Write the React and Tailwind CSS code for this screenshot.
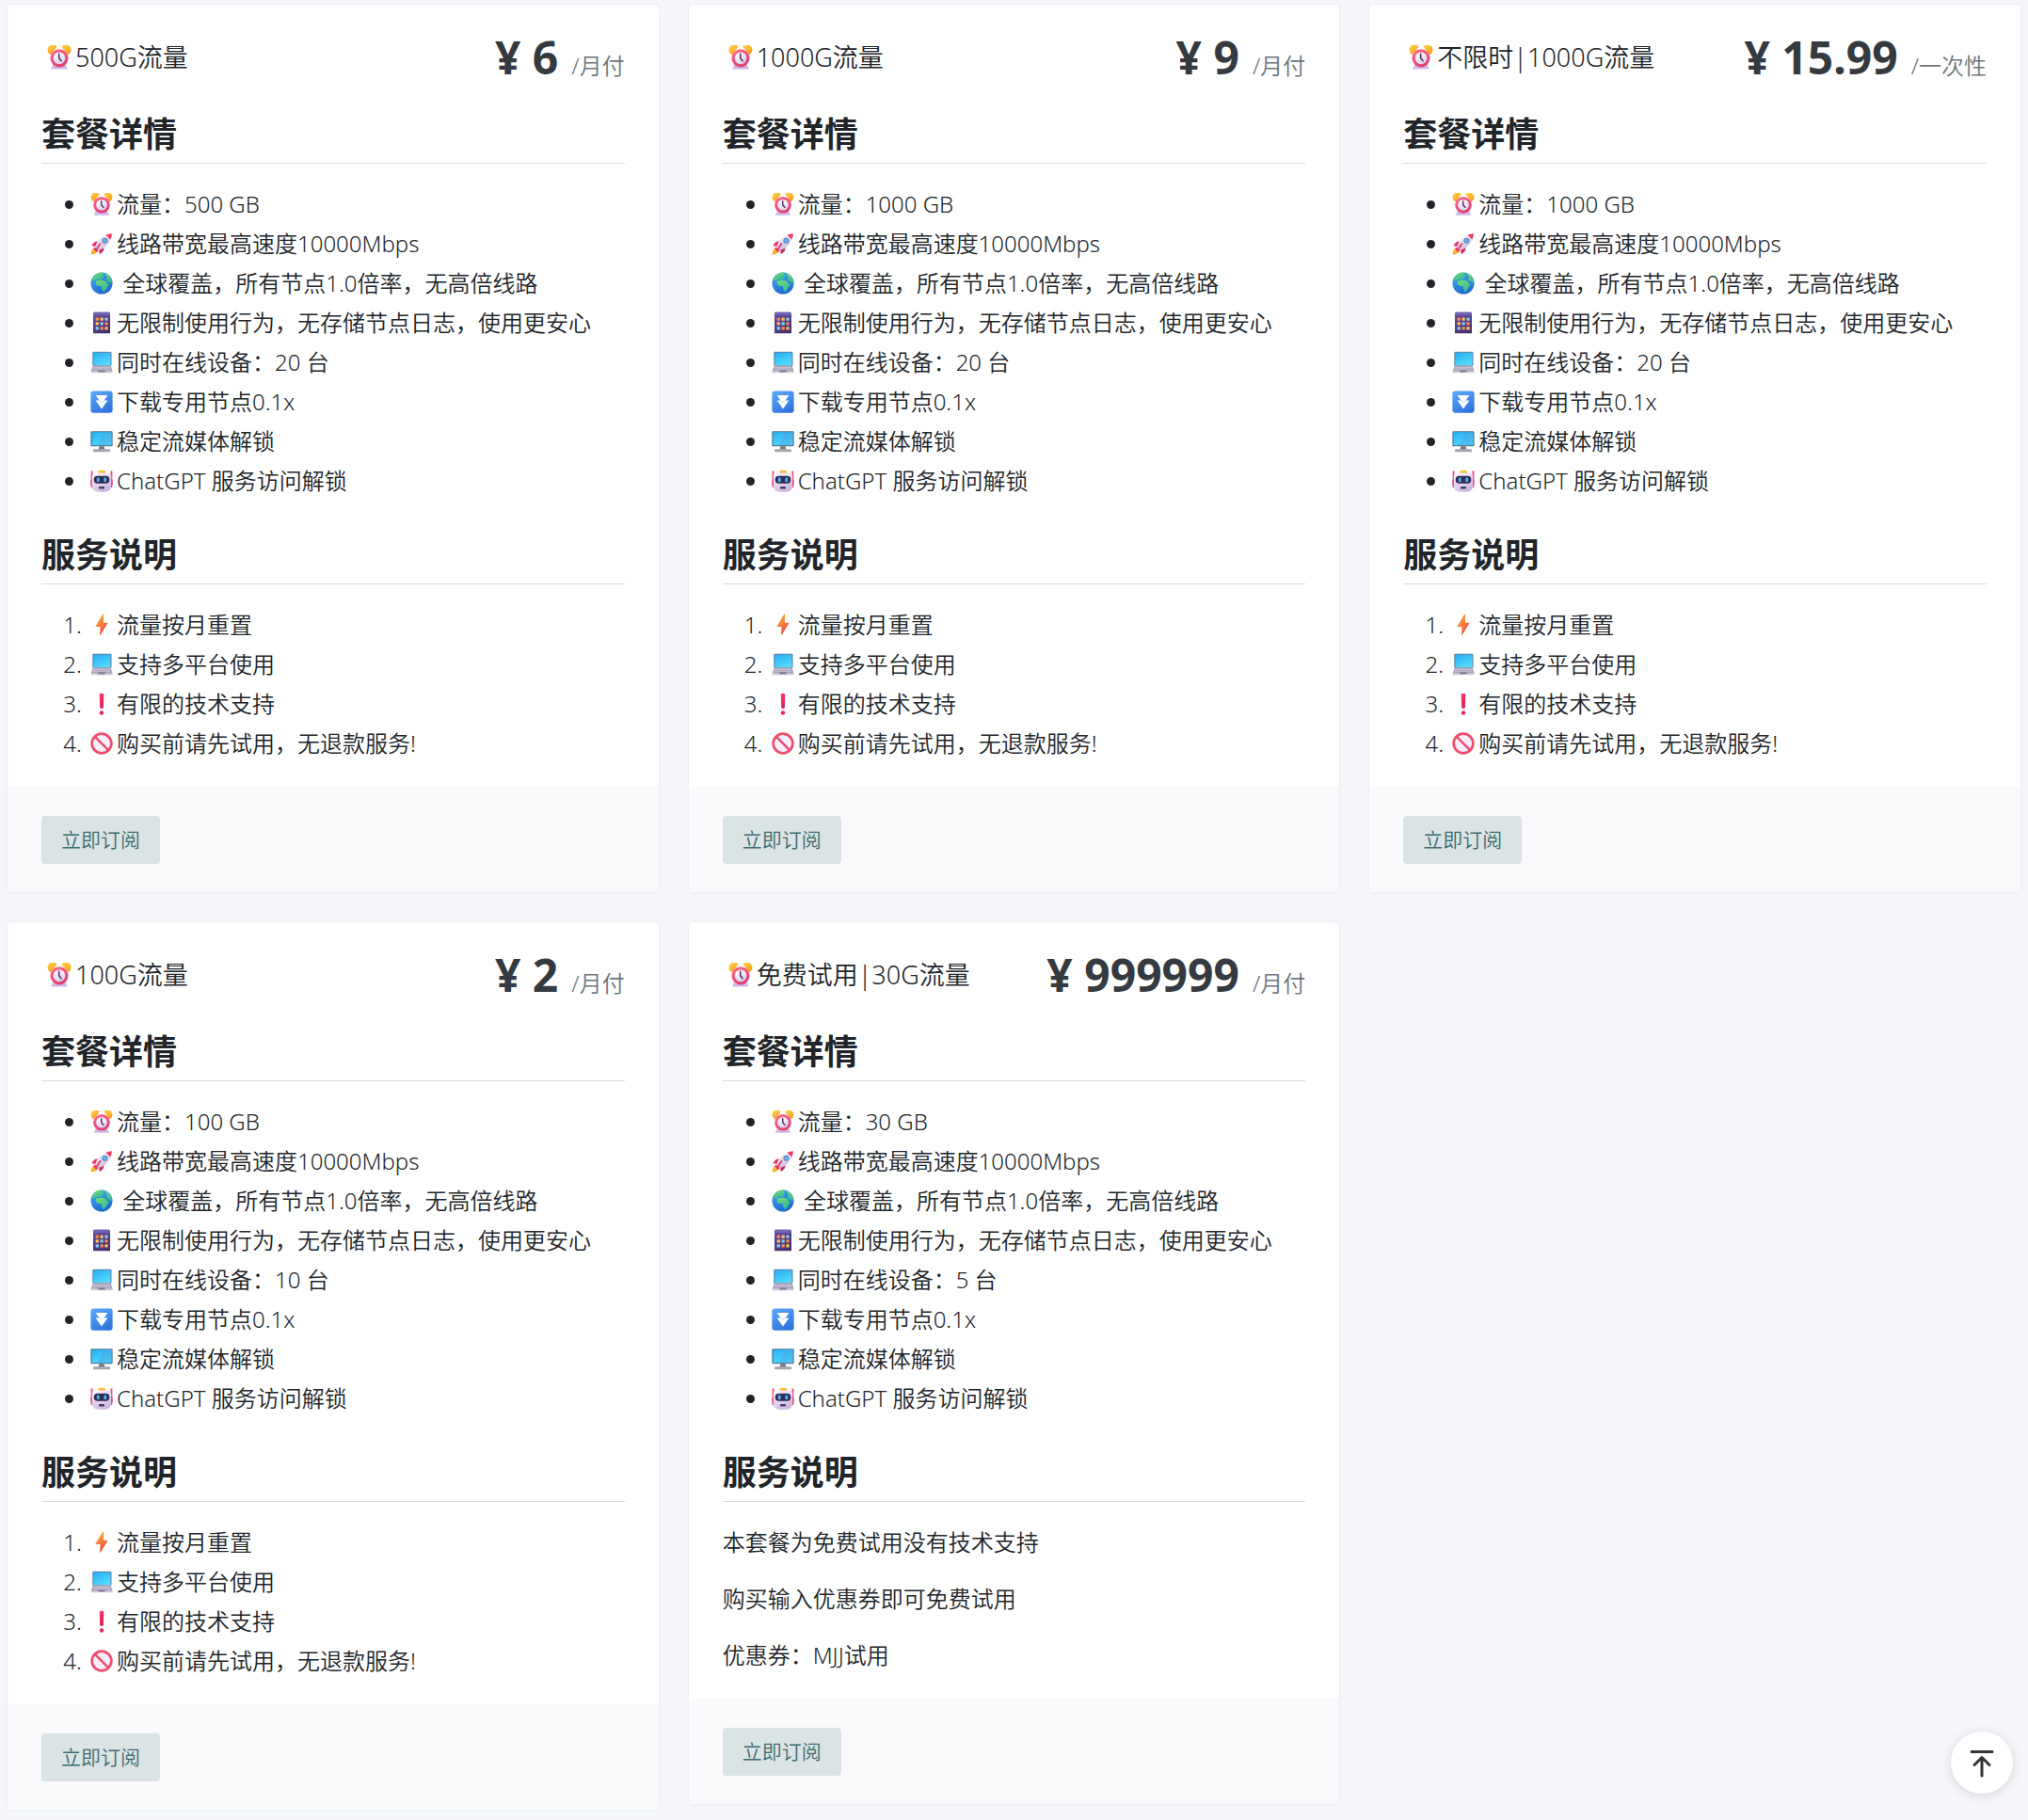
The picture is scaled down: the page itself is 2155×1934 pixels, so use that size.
import React from 'react';

const GRADIENTS = [
  ['gold', '#ffd24a', '#f59b1c'],
  ['pink', '#ff6a86', '#e03a72'],
  ['dial', '#ffffff', '#d9cdea'],
  ['hull', '#ffffff', '#c3b4d8'],
  ['sea', '#3fa9f5', '#1c63c9'],
  ['land', '#6fdc74', '#2fb6a0'],
  ['purple', '#6a4a9c', '#46306f'],
  ['screen', '#29b2f2', '#55dcff'],
  ['blue', '#5aa6f8', '#2f73dc'],
  ['bolt', '#fbb13c', '#f0433a'],
  ['red', '#ff3d62', '#d8175a'],
  ['face', '#fdf6ff', '#c9b3de'],
];

const Defs = () => (
  <svg className="absolute h-0 w-0" aria-hidden="true">
    <defs>
      {GRADIENTS.map(([id, from, to]) => (
        <linearGradient key={id} id={id} x1="0.2" y1="0" x2="0.7" y2="1">
          <stop offset="0" stopColor={from} />
          <stop offset="1" stopColor={to} />
        </linearGradient>
      ))}
    </defs>
  </svg>
);

const ICONS = {
  clock: (
    <>
      <path d="M8 25 H24 L27 31.5 H5 Z" fill="#cdbbe6" />
      <path d="M2 10 A6.5 6.5 0 0 1 13 2 L4.5 12.5 Z" fill="url(#gold)" />
      <path d="M30 10 A6.5 6.5 0 0 0 19 2 L27.5 12.5 Z" fill="url(#gold)" />
      <circle cx="16" cy="17" r="11.8" fill="url(#pink)" />
      <circle cx="16" cy="17" r="7.8" fill="url(#dial)" />
      <path d="M15.6 11.5 V17 L18.6 20.5" fill="none" stroke="#4b2a63" strokeWidth="1.8" strokeLinecap="round" strokeLinejoin="round" />
    </>
  ),
  rocket: (
    <>
      <path d="M6 21 C2 23 1 27 0.8 31.2 C5 31 9 30 11 26 Z" fill="url(#gold)" />
      <path d="M12 13 C7 12 4 14 2 19 L9 20 Z" fill="#e8346c" />
      <path d="M19 20 C20 25 18 28 13 30.5 L12 23 Z" fill="#d42663" />
      <path d="M7 22 C8 12 16 3 30.5 1.5 C29.5 15 20 24 10 25.5 Z" fill="url(#hull)" />
      <path d="M22 3.6 C24.6 2.4 27.5 1.7 30.5 1.5 C30.3 4.5 29.6 7.3 28.3 10 Z" fill="#f23a5e" />
      <path d="M6 20.5 L11.5 26 L8.5 27.5 L4.5 23.5 Z" fill="#e8346c" />
      <circle cx="20.5" cy="11.5" r="4" fill="#5b7fc4" />
      <circle cx="20.5" cy="11.5" r="2.6" fill="#62b6f2" />
      <path d="M14 16 L8 25" stroke="#e8346c" strokeWidth="2.4" strokeLinecap="round" />
    </>
  ),
  globe: (
    <>
      <circle cx="16" cy="16" r="15.4" fill="url(#sea)" />
      <path d="M2.5 9 C5 4 10 1 15 0.7 L19 1 L17 4 L20 6 L16 8 L18 10 L14 11 L10 10 L7 12.5 L3.5 13 Z" fill="url(#land)" />
      <path d="M8 13 L13 11.5 L19 12 L23 14 L24 17 L27 17.5 L24 21 L22 25 L18.5 28.5 L16 24 L15.5 20 L10 19.5 L7.5 16.5 Z" fill="url(#land)" />
      <path d="M21 2 L25 3.5 C28 6 30 9.5 31 13.5 L29 17 L26 13.5 L22.5 11 L24 8 Z" fill="url(#land)" />
    </>
  ),
  grid: (
    <>
      <path d="M6 1 H26 A2 2 0 0 1 28 3 V31 H4 V3 A2 2 0 0 1 6 1 Z" fill="url(#purple)" />
      <path d="M5 1 H27 L28 5.5 H4 Z" fill="#6f62b5" />
      {[8.5, 15, 21.5].map((y, row) =>
        [7.5, 14, 20.5].map((x, col) => (
          <rect key={`${x}-${y}`} x={x} y={y} width="4.4" height="4.4" rx="0.6" fill={['#f98a4b', '#fdc35a', '#7ccdf5'][(row + col) % 3]} />
        ))
      )}
    </>
  ),
  laptop: (
    <>
      <rect x="3" y="1" width="27" height="20" rx="1.5" fill="#5f86ad" />
      <rect x="4.5" y="2.5" width="24" height="17.5" fill="url(#screen)" />
      <path d="M3.5 21 H29 L31.5 29 H0.8 Z" fill="#a9a3b8" />
      <path d="M0.8 29 H31.5 V31 H0.8 Z" fill="#cfc9dc" />
      <path d="M4.5 23 H28 M3.8 25.5 H28.8" stroke="#dcd8e6" strokeWidth="1.3" strokeDasharray="2 0.8" />
      <rect x="11" y="27" width="10" height="3" fill="#858096" />
    </>
  ),
  down: (
    <>
      <rect x="0.5" y="0.5" width="31" height="31" rx="4" fill="url(#blue)" />
      <path d="M7.5 6.5 H24.5 L19.5 14 H24.5 L16 26 L7.5 14 H12.5 Z" fill="#fff" />
      <path d="M12.5 14 L16 17 L19.5 14" fill="none" stroke="#a9cdf8" strokeWidth="1" />
    </>
  ),
  monitor: (
    <>
      <rect x="0.5" y="1.5" width="31" height="21.5" rx="1.5" fill="#4a7391" />
      <rect x="2" y="3" width="28" height="18.5" fill="url(#screen)" />
      <path d="M19 3 H30 V21.5 H10 Z" fill="#4c9fdf" opacity="0.45" />
      <path d="M12.5 23 H19.5 L20.5 27.5 H11.5 Z" fill="#77757f" />
      <rect x="4" y="27" width="24" height="4" rx="1" fill="#a6a4ad" />
    </>
  ),
  robot: (
    <>
      <rect x="0.8" y="1.5" width="2.6" height="24" rx="1.3" fill="#f0507f" />
      <rect x="28.6" y="1.5" width="2.6" height="24" rx="1.3" fill="#f0507f" />
      <rect x="0.5" y="14" width="4" height="8" rx="1.5" fill="#e0447c" />
      <rect x="27.5" y="14" width="4" height="8" rx="1.5" fill="#e0447c" />
      <rect x="11" y="1" width="10" height="6" rx="2" fill="url(#gold)" />
      <path d="M8 4.5 H24 Q29.5 4.5 29.5 10 V22 Q29.5 31.5 20 31.5 H12 Q2.5 31.5 2.5 22 V10 Q2.5 4.5 8 4.5 Z" fill="url(#face)" />
      <rect x="5" y="9" width="22" height="10.5" rx="5" fill="#332b52" />
      <rect x="9" y="11" width="4" height="6.5" rx="2" fill="#3fb2f5" />
      <rect x="19" y="11" width="4" height="6.5" rx="2" fill="#3fb2f5" />
      <rect x="12" y="24" width="8" height="3.2" rx="1" fill="#4a3d68" />
    </>
  ),
  bolt: <path d="M17.5 1 L7 18.5 H14 L13.5 31.5 L25 13 H18.5 L19 1 Z" fill="url(#bolt)" />,
  mark: (
    <>
      <path d="M13 2.5 Q13 1 16 1 Q19 1 19 2.5 L18.5 21 Q18.5 22.5 16 22.5 Q13.5 22.5 13.5 21 Z" fill="url(#red)" />
      <circle cx="16" cy="28.5" r="3" fill="#ef2a55" />
    </>
  ),
  ban: (
    <>
      <circle cx="16" cy="16" r="13.8" fill="#f8eefb" stroke="#ee4f6e" strokeWidth="3.6" />
      <path d="M6.5 6.5 L25.5 25.5" stroke="#ee4f6e" strokeWidth="3.6" />
    </>
  ),
};

const Icon = ({ name, className }) => (
  <svg viewBox="0 0 32 32" className={className} aria-hidden="true">
    {ICONS[name]}
  </svg>
);

const Item = ({ icon, children }) => (
  <li className="mt-1.5 pl-[3px] whitespace-pre first:mt-0">
    <Icon name={icon} className="mr-1 inline-block size-6 align-[-3px]" />
    {children}
  </li>
);

const Heading = ({ children }) => (
  <h2 className="mb-[25px] border-b border-[#d9dbde] pb-2 text-4xl leading-[45px] font-bold">{children}</h2>
);

const PLANS = [
  { title: '500G流量', price: '6', period: '月付', quota: '500', devices: 20 },
  { title: '1000G流量', price: '9', period: '月付', quota: '1000', devices: 20 },
  { title: '不限时|1000G流量', price: '15.99', period: '一次性', quota: '1000', devices: 20 },
  { title: '100G流量', price: '2', period: '月付', quota: '100', devices: 10 },
  {
    title: '免费试用|30G流量',
    price: '999999',
    period: '月付',
    quota: '30',
    devices: 5,
    notes: ['本套餐为免费试用没有技术支持', '购买输入优惠券即可免费试用', '优惠券：MJJ试用'],
  },
];

const Plan = ({ plan }) => (
  <article className="overflow-hidden rounded-sm bg-white shadow-[0_0_3px_rgba(40,60,110,0.10)]">
    <div className="px-9 pt-5 pb-7">
      <header className="mb-[23px] flex items-center justify-between">
        <div className="flex items-center gap-1 pl-1.5 text-[27px] leading-9">
          <Icon name="clock" className="size-[26px]" />
          {plan.title}
        </div>
        <div className="flex items-baseline gap-3.5 text-5xl leading-[72px] font-bold text-[#343a40]">
          ¥ {plan.price}
          <span className="text-2xl font-[350] text-[#6c757d]">/{plan.period}</span>
        </div>
      </header>

      <Heading>套餐详情</Heading>
      <ul className="mb-[38px] list-disc pl-[49px]">
        <Item icon="clock">流量：{plan.quota} GB</Item>
        <Item icon="rocket">线路带宽最高速度10000Mbps</Item>
        <Item icon="globe"> 全球覆盖，所有节点1.0倍率，无高倍线路</Item>
        <Item icon="grid">无限制使用行为，无存储节点日志，使用更安心</Item>
        <Item icon="laptop">同时在线设备：{plan.devices} 台</Item>
        <Item icon="down">下载专用节点0.1x</Item>
        <Item icon="monitor">稳定流媒体解锁</Item>
        <Item icon="robot">ChatGPT 服务访问解锁</Item>
      </ul>

      <Heading>服务说明</Heading>
      {plan.notes ? (
        <div className="space-y-6">
          {plan.notes.map((note) => (
            <p key={note}>{note}</p>
          ))}
        </div>
      ) : (
        <ol className="list-decimal pl-[49px]">
          <Item icon="bolt">流量按月重置</Item>
          <Item icon="laptop">支持多平台使用</Item>
          <Item icon="mark">有限的技术支持</Item>
          <Item icon="ban">购买前请先试用，无退款服务!</Item>
        </ol>
      )}
    </div>
    <footer className="bg-[#fafafc] px-9 pt-[31px] pb-[30px]">
      <button type="button" className="block rounded-sm bg-[#dae4e5] px-[21px] py-2 text-[21px] leading-[35px] text-[#3a6b70]">
        立即订阅
      </button>
    </footer>
  </article>
);

export default function App() {
  return (
    <main className="min-h-screen bg-[#f5f7fb] px-2 pt-[5px] pb-3 font-['Noto_Sans','Noto_Sans_CJK_SC',sans-serif] text-2xl leading-9 font-[350] text-[#212529]">
      <Defs />
      <div className="grid grid-cols-3 items-start gap-8">
        {PLANS.map((plan) => (
          <Plan key={plan.title} plan={plan} />
        ))}
      </div>
      <button
        type="button"
        aria-label="回到顶部"
        className="fixed right-4 bottom-7 flex size-[66px] items-center justify-center rounded-full bg-white text-[#333639] shadow-[0_2px_12px_rgba(0,0,0,0.14)]"
      >
        <svg viewBox="0 0 32 32" className="size-8" fill="none" stroke="currentColor" strokeWidth="3" strokeLinecap="round" strokeLinejoin="round">
          <path d="M5 4.5 H27 M16 30 V11 M8 18.5 L16 10.5 L24 18.5" />
        </svg>
      </button>
    </main>
  );
}
